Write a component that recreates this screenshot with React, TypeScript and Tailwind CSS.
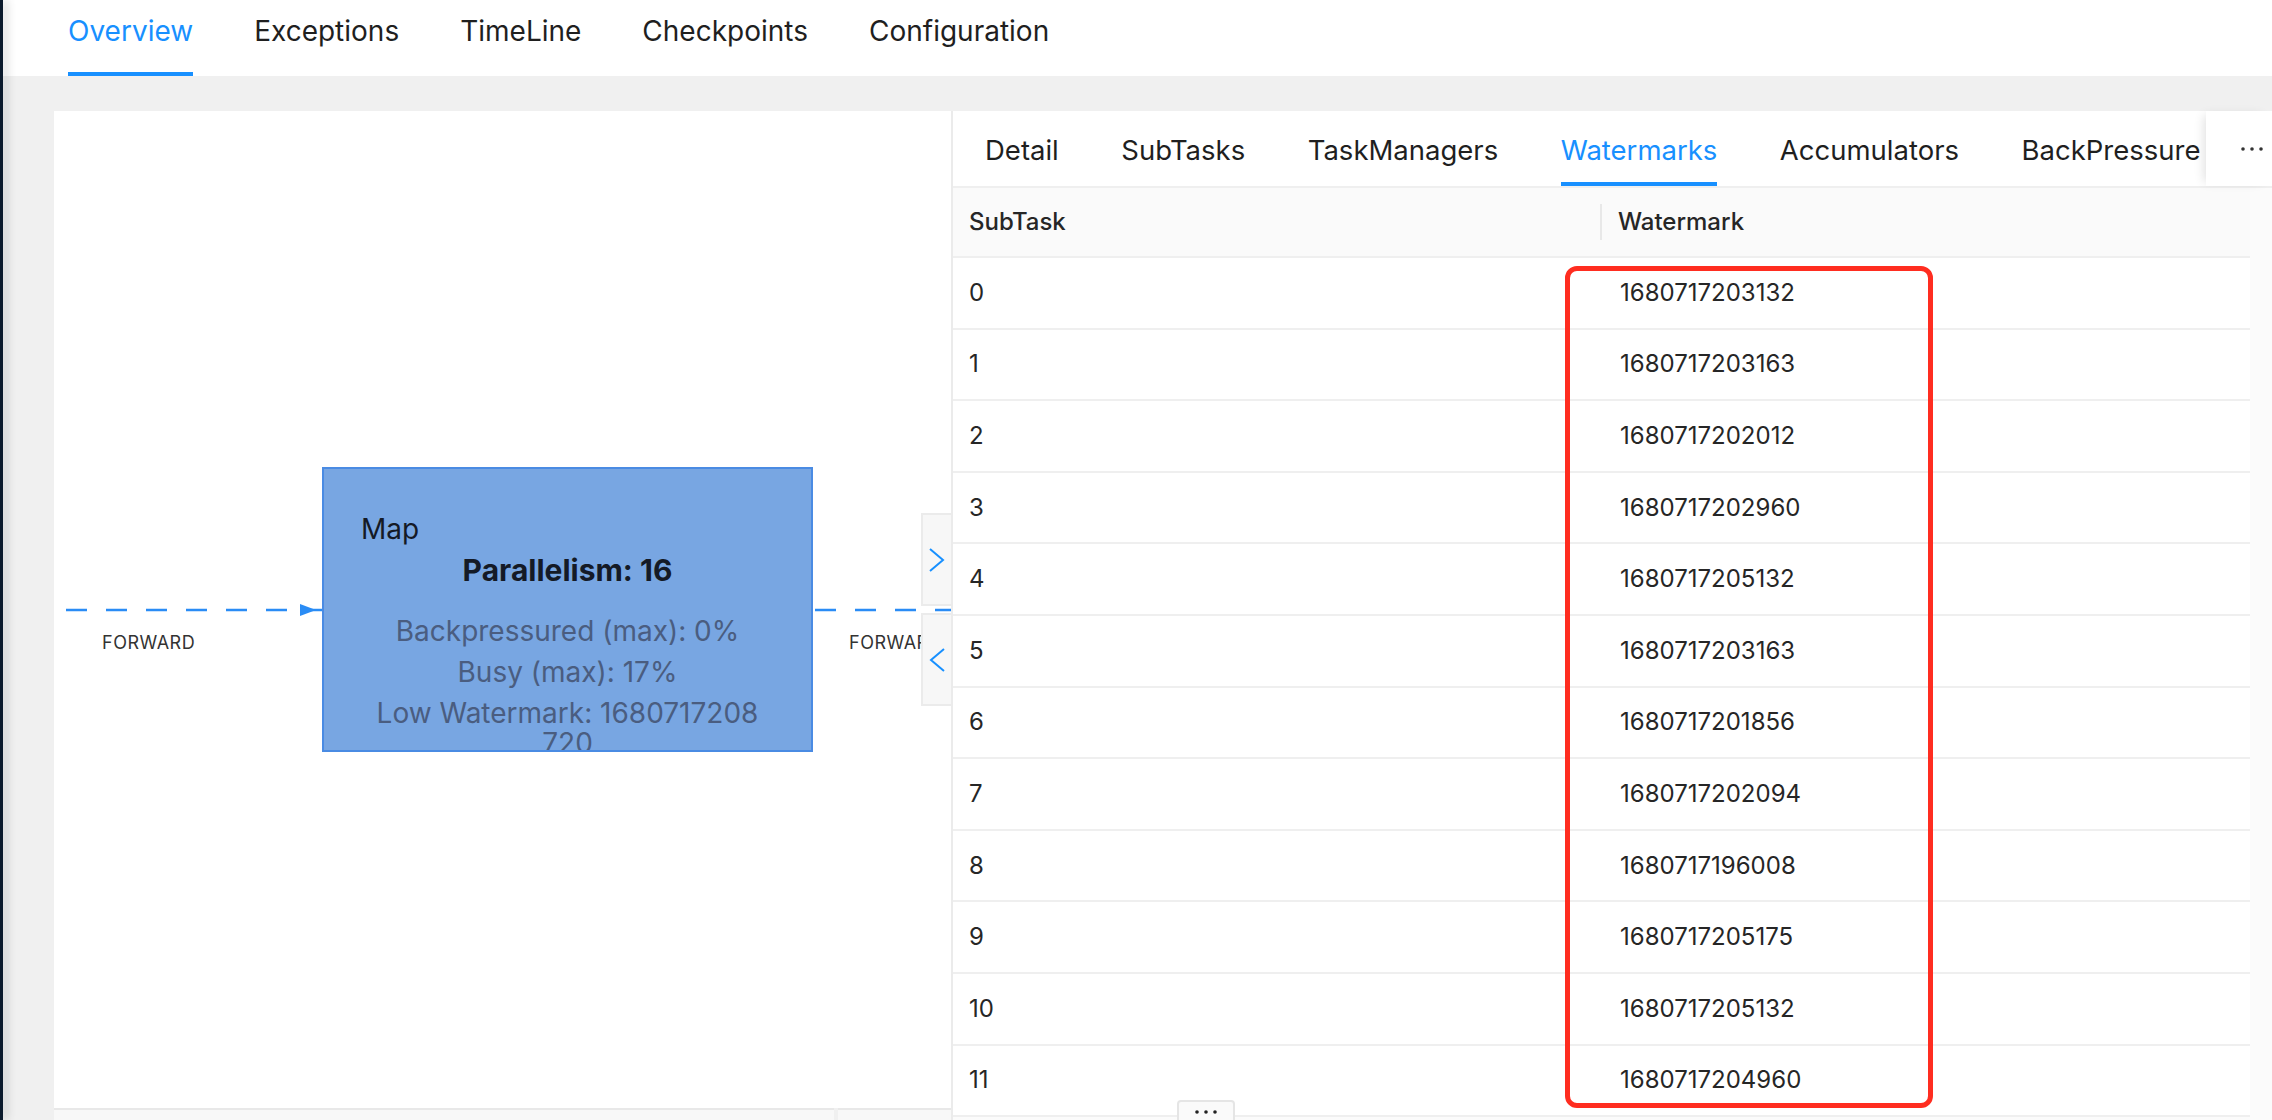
import React from "react";

const navTabs = ["Overview", "Exceptions", "TimeLine", "Checkpoints", "Configuration"];
const detailTabs = ["Detail", "SubTasks", "TaskManagers", "Watermarks", "Accumulators", "BackPressure"];
const watermarks = [
    "1680717203132",
    "1680717203163",
    "1680717202012",
    "1680717202960",
    "1680717205132",
    "1680717203163",
    "1680717201856",
    "1680717202094",
    "1680717196008",
    "1680717205175",
    "1680717205132",
    "1680717204960",
];

const Dots: React.FC<{ color?: string }> = ({ color = "#333" }) => (
    <svg width="24" height="6" viewBox="0 0 24 6">
        <circle cx="3" cy="3" r="1.8" fill={color} />
        <circle cx="12" cy="3" r="1.8" fill={color} />
        <circle cx="21" cy="3" r="1.8" fill={color} />
    </svg>
);

const JobGraph: React.FC = () => (
    <div className="h-[997px] shrink-0 bg-white relative overflow-hidden">
        <svg className="absolute inset-0" width="897" height="997">
            <line x1="12" y1="499" x2="248" y2="499" stroke="#2a8cf5" strokeWidth="2.5" strokeDasharray="21 19" />
            <line x1="255" y1="499" x2="268" y2="499" stroke="#2a8cf5" strokeWidth="2.5" />
            <polygon points="246,493 262,499 246,505" fill="#2a8cf5" />
            <line x1="761" y1="499" x2="897" y2="499" stroke="#2a8cf5" strokeWidth="2.5" strokeDasharray="21 19" />
        </svg>

        <div className="absolute left-[48px] top-[520px] text-[18px] leading-[24px] tracking-[0.5px] text-[#333]">FORWARD</div>
        <div className="absolute left-[795px] top-[520px] text-[18px] leading-[24px] tracking-[0.5px] text-[#333]">FORWARD</div>

        <div className="absolute left-[268px] top-[356px] w-[491px] h-[285px] bg-[#78a6e2] border-2 border-[#4a8be3] overflow-hidden text-[28px]">
            <div className="pt-[45px] pl-[37px] leading-[30px] text-[#141a26]">Map</div>
            <div className="mt-[10px] text-center text-[30px] leading-[32px] font-bold text-[#141a26]">Parallelism: 16</div>
            <div className="mt-[30px] flex flex-col gap-[11px] text-center leading-[30px] text-[#4a5d80]">
                <div>Backpressured (max): 0%</div>
                <div>Busy (max): 17%</div>
                <div>
                    Low Watermark: 1680717208
                    <br />
                    720
                </div>
            </div>
        </div>

        {/* collapse toggles */}
        <div className="absolute right-0 top-[402px] w-[30px] h-[93px] bg-[#f7f7f7] border-2 border-r-0 border-[#ebebeb] flex items-center justify-center">
            <svg width="16" height="24" viewBox="0 0 16 24">
                <polyline points="1,1 14,12 1,23" fill="none" stroke="#1890ff" strokeWidth="2" />
            </svg>
        </div>
        <div className="absolute right-0 top-[502px] w-[30px] h-[93px] bg-[#f7f7f7] border-2 border-r-0 border-[#ebebeb] flex items-center justify-center">
            <svg width="16" height="24" viewBox="0 0 16 24">
                <polyline points="15,1 2,12 15,23" fill="none" stroke="#1890ff" strokeWidth="2" />
            </svg>
        </div>
    </div>
);

const WatermarkTable: React.FC = () => (
    <div className="mr-[22px] bg-white">
        <div className="h-[70px] bg-[#fafafa] border-b-2 border-[#efefef] flex items-center text-[24px] font-medium text-[#262626]">
            <div className="w-[647px] pl-[16px]">SubTask</div>
            <div className="h-[36px] w-[2px] bg-[#e8e8e8]" />
            <div className="pl-[16px]">Watermark</div>
        </div>
        {watermarks.map((w, i) => (
            <div key={i} className="h-[71.6px] border-b-2 border-[#efefef] flex items-center text-[24px] text-[#262626]">
                <div className="w-[647px] pl-[16px]">{i}</div>
                <div className="pl-[20px]">{w}</div>
            </div>
        ))}
    </div>
);

export default function App() {
    return (
        <div className="w-[2272px] h-[1120px] overflow-hidden flex bg-[#f0f0f0] font-['Inter',sans-serif] text-[#262626] relative">
            <div className="w-[3px] shrink-0 bg-[#0b1a2c] shadow-[3px_0_10px_rgba(0,0,0,0.3)] z-10" />
            <div className="flex-1 flex flex-col min-w-0">
                <nav className="h-[76px] shrink-0 bg-white flex gap-[61px] pl-[65px]">
                    {navTabs.map((t, i) => (
                        <div key={t} className="h-full flex flex-col justify-between">
                            <span className={`mt-[13px] text-[28px] leading-[36px] ${i === 0 ? "text-[#1890ff]" : "text-[#1f1f1f]"}`}>{t}</span>
                            <div className={`h-[4px] ${i === 0 ? "bg-[#1890ff]" : ""}`} />
                        </div>
                    ))}
                </nav>

                <div className="flex-1 flex pt-[35px] pl-[51px] min-h-0">
                    <div className="w-[897px] shrink-0 flex flex-col">
                        <JobGraph />
                        <div className="flex gap-[4px] h-[20px] shrink-0">
                            <div className="w-[780px] bg-[#f8f8f8] border-t-2 border-[#e8e8e8]" />
                            <div className="flex-1 bg-[#f8f8f8] border-t-2 border-[#e8e8e8]" />
                        </div>
                    </div>

                    <div className="flex-1 min-w-0 flex flex-col bg-[#fbfbfb] border-l-2 border-[#ebebeb] relative">
                        <div className="h-[77px] shrink-0 bg-white border-b-2 border-[#efefef] flex gap-[62.5px] pl-[32px] relative">
                            {detailTabs.map((t) => (
                                <div key={t} className="h-full flex flex-col justify-between">
                                    <span className={`mt-[21px] text-[27.5px] leading-[36px] ${t === "Watermarks" ? "text-[#1890ff]" : "text-[#1f1f1f]"}`}>{t}</span>
                                    <div className={`h-[4px] ${t === "Watermarks" ? "bg-[#1890ff]" : ""}`} />
                                </div>
                            ))}
                            <div className="absolute right-0 top-0 h-[75px] w-[66px] bg-white shadow-[-6px_0_10px_-4px_rgba(0,0,0,0.12)] flex items-center pl-[34px]">
                                <Dots />
                            </div>
                        </div>
                        <WatermarkTable />
                    </div>
                </div>
            </div>

            {/* annotation */}
            <div className="absolute left-[1565px] top-[266px] w-[368px] h-[842px] border-[5px] border-[#ff2d20] rounded-[12px] pointer-events-none" />

            {/* bottom expander */}
            <div className="absolute left-[1177px] top-[1100px] w-[58px] h-[24px] rounded-[4px] border-2 border-[#e5e5e5] bg-[#fafafa] flex items-start justify-center pt-[7px]">
                <Dots color="#222" />
            </div>
        </div>
    );
}
